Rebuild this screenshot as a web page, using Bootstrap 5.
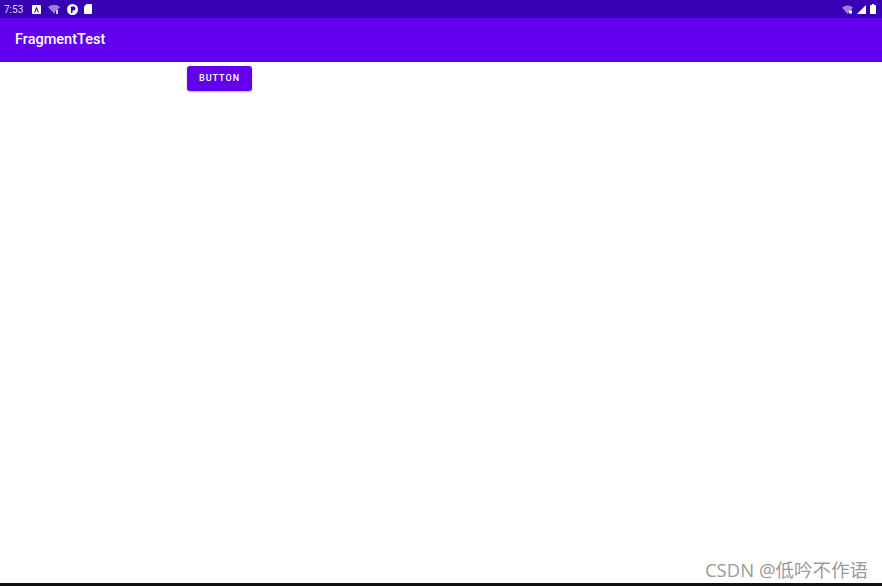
<!DOCTYPE html>
<html lang="en">
<head>
    <meta charset="UTF-8">
    <meta name="viewport" content="width=device-width, initial-scale=1.0">
    <title>FragmentTest</title>
    <link href="https://cdn.jsdelivr.net/npm/bootstrap@5.3.3/dist/css/bootstrap.min.css" rel="stylesheet">
    <style>
        html, body { height: 100%; }
        body { background: #fff; font-family: Roboto, "Liberation Sans", sans-serif; overflow: hidden; }
        .screen { height: 586px; }
        .status-bar { height: 18px; background: #3700b3; color: #e6dcf8; padding: 0 6px 0 4px; font-size: 10px; line-height: 1; }
        .status-time { width: 28px; padding-top: 2px; }
        .status-icon { display: block; }
        .status-gap-a { margin-right: 7px; }
        .status-gap-b { margin-right: 6px; }
        .app-bar { height: 44px; background: #6200ee; color: #fff; padding-left: 15px; font-size: 14.5px; font-weight: 500; }
        .content-area { padding: 4px 0 0 187px; }
        .btn-button { width: 65px; height: 25px; background: #6200ee; color: #fff; border: 0; border-radius: 3px; padding: 0; padding-top: 1px;
            font-size: 9px; font-weight: 500; letter-spacing: 1px; box-shadow: 0 1px 2px rgba(0,0,0,.3); }
        .btn-button:hover { background: #6200ee; color: #fff; }
        .watermark { right: 14px; bottom: 7px; color: #9a9a9a; font-size: 18.5px; line-height: 1; font-family: "Open Sans", "Noto Sans CJK SC", sans-serif; }
        .bottom-line { left: 0; right: 0; bottom: 0; height: 3px; background: #111; }
    </style>
</head>
<body>
    <div class="screen position-relative d-flex flex-column">
        <div class="status-bar d-flex align-items-center">
            <span class="status-time">7:53</span>
            <svg class="status-icon status-gap-a" width="9" height="9" viewBox="0 0 9 9"><rect width="9" height="9" rx="1" fill="#fff"/><path d="M2 7.5 4.5 1.5 7 7.5H5.8L4.5 4.2 3.2 7.5Z" fill="#3700b3"/></svg>
            <svg class="status-icon status-gap-a" width="12" height="10" viewBox="0 0 12 10"><path d="M0 3Q6-1.5 12 3L8.5 7H7V9.500H6Z" fill="#9a80dc"/><rect x="8" y="6" width="2" height="4" fill="#d8ccf2"/></svg>
            <svg class="status-icon status-gap-b" width="11" height="11" viewBox="0 0 11 11"><circle cx="5.500" cy="5.500" r="5.500" fill="#fff"/><path d="M4 9V2.500H6.500A2 2 0 0 1 6.500 6.500H5.500V9Z" fill="#3700b3"/></svg>
            <svg class="status-icon" width="8" height="10" viewBox="0 0 8 10"><path d="M2.500 0H7Q8 0 8 1V9Q8 10 7 10H1Q0 10 0 9V2.500Z" fill="#fff"/></svg>
            <div class="ms-auto d-flex align-items-center gap-1">
                <svg class="status-icon" width="11" height="9" viewBox="0 0 11 9"><path d="M0 2.500Q5.500-1.500 11 2.500L5.500 9Z" fill="#9a80dc"/><rect x="7" y="5.500" width="3" height="3" fill="#fff"/></svg>
                <svg class="status-icon" width="9" height="9" viewBox="0 0 9 9"><path d="M9 0V9H0Z" fill="#fff"/></svg>
                <svg class="status-icon" width="6" height="10" viewBox="0 0 6 10"><path d="M2 0H4V1H5.500Q6 1 6 1.500V10H0V1.500Q0 1 .5 1H2Z" fill="#fff"/></svg>
            </div>
        </div>
        <div class="app-bar d-flex align-items-center">FragmentTest</div>
        <div class="content-area">
            <button type="button" class="btn btn-button d-block">BUTTON</button>
        </div>
        <div class="watermark position-absolute">CSDN @低吟不作语</div>
        <div class="bottom-line position-absolute"></div>
    </div>
    <script src="https://cdn.jsdelivr.net/npm/bootstrap@5.3.3/dist/js/bootstrap.bundle.min.js"></script>
</body>
</html>
